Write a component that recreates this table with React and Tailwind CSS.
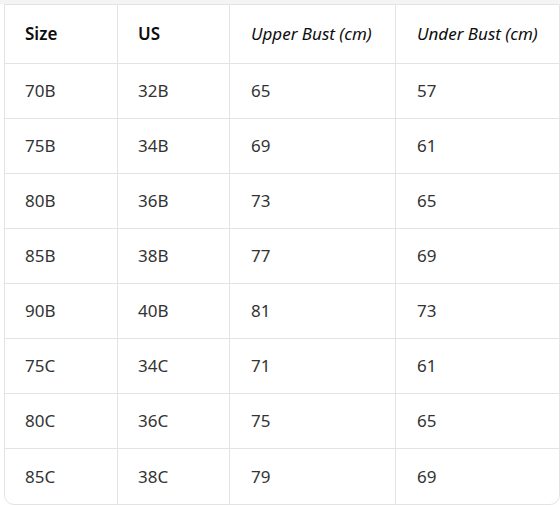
import React from "react";

const rows = [
  ["70B", "32B", "65", "57"],
  ["75B", "34B", "69", "61"],
  ["80B", "36B", "73", "65"],
  ["85B", "38B", "77", "69"],
  ["90B", "40B", "81", "73"],
  ["75C", "34C", "71", "61"],
  ["80C", "36C", "75", "65"],
  ["85C", "38C", "79", "69"],
];

const widths = ["w-[113px]", "w-[112px]", "w-[166px]", "w-[163px]"];

export default function App() {
  return (
    <div className="w-[560px] h-[505px] bg-white overflow-hidden" style={{ fontFamily: '"Noto Sans", "Open Sans", sans-serif' }}>
      <div className="h-[4px] bg-[#f4f4f4]" />
      <div className="ml-[4px] w-[556px] border border-[#e3e3e3] rounded-b-[10px] overflow-hidden">
        <div className="flex h-[59px] border-b border-[#e3e3e3] text-[17px] text-[#0d0d0d]">
          <div className={`${widths[0]} border-r border-[#e3e3e3] px-5 flex items-center font-semibold`}>Size</div>
          <div className={`${widths[1]} border-r border-[#e3e3e3] px-5 flex items-center font-semibold`}>US</div>
          <div className={`${widths[2]} border-r border-[#e3e3e3] pl-[21px] flex items-center italic`}>Upper Bust (cm)</div>
          <div className={`${widths[3]} pl-[21px] flex items-center italic whitespace-nowrap`}>Under Bust (cm)</div>
        </div>
        {rows.map((r, i) => (
          <div key={i} className={`flex h-[55px] text-[17px] text-[#333333] ${i < rows.length - 1 ? "border-b border-[#e3e3e3]" : ""}`}>
            {r.map((c, j) => (
              <div key={j} className={`${widths[j]} ${j < 3 ? "border-r border-[#e3e3e3]" : ""} ${j < 2 ? "px-5" : "pl-[21px]"} flex items-center`}>{c}</div>
            ))}
          </div>
        ))}
      </div>
    </div>
  );
}
